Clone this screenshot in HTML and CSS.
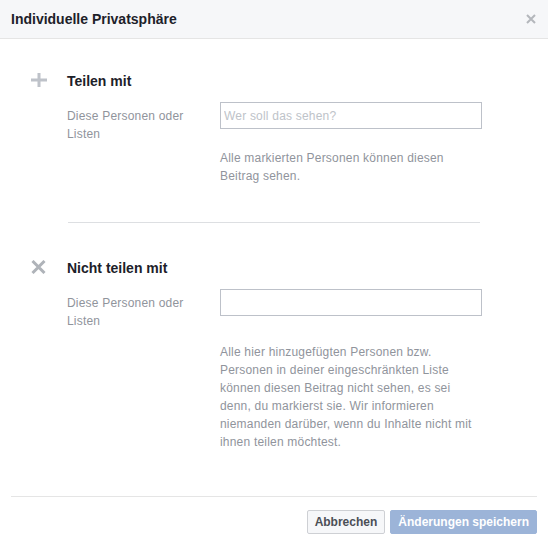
FILE: index.html
```html
<!DOCTYPE html>
<html lang="de">
<head>
    <meta charset="UTF-8">
    <meta name="viewport" content="width=device-width, initial-scale=1.0">
    <title>Individuelle Privatsphäre</title>
    <link rel="stylesheet" href="styles.css">
</head>
<body>
    <div class="dialog">
        <div class="dialog-head">
            <h2>Individuelle Privatsphäre</h2>
            <svg class="close-icon" width="10" height="10" viewBox="0 0 10 10">
                <path d="M1 1 L9 9 M9 1 L1 9" stroke="#b4b7bc" stroke-width="2" fill="none"/>
            </svg>
        </div>

        <div class="section">
            <div class="section-head">
                <svg class="section-icon" width="16" height="14" viewBox="0 0 16 14">
                    <path d="M0 7 H16 M8 0 V14" stroke="#bec2c9" stroke-width="3" fill="none"/>
                </svg>
                <h3>Teilen mit</h3>
            </div>
            <div class="row">
                <label>Diese Personen oder Listen</label>
                <div class="field">
                    <input type="text" placeholder="Wer soll das sehen?">
                    <p class="help">Alle markierten Personen können diesen Beitrag sehen.</p>
                </div>
            </div>
        </div>

        <hr class="divider">

        <div class="section section-exclude">
            <div class="section-head">
                <svg class="section-icon" width="16" height="14" viewBox="0 0 16 14">
                    <path d="M1.5 1 L13.5 13 M13.5 1 L1.5 13" stroke="#afb3b9" stroke-width="3" fill="none"/>
                </svg>
                <h3>Nicht teilen mit</h3>
            </div>
            <div class="row">
                <label>Diese Personen oder Listen</label>
                <div class="field">
                    <input type="text">
                    <p class="help">Alle hier hinzugefügten Personen bzw. Personen in deiner eingeschränkten Liste können diesen Beitrag nicht sehen, es sei denn, du markierst sie. Wir informieren niemanden darüber, wenn du Inhalte nicht mit ihnen teilen möchtest.</p>
                </div>
            </div>
        </div>

        <div class="dialog-foot">
            <button class="btn">Abbrechen</button>
            <button class="btn btn-primary" disabled>Änderungen speichern</button>
        </div>
    </div>
</body>
</html>
```

FILE: styles.css
```css
* {
    margin: 0;
    padding: 0;
    box-sizing: border-box;
}
body {
    background: #fff;
    font-family: "Liberation Sans", Arial, sans-serif;
    color: #1d2129;
}
.dialog {
    width: 548px;
}
.dialog-head {
    height: 39px;
    background-color: #f6f7f9;
    border-bottom: 1px solid #e5e5e5;
    padding: 0 12px 0 11px;
    display: flex;
    align-items: center;
    justify-content: space-between;
}
.dialog-head h2 {
    font-size: 14px;
    font-weight: bold;
    line-height: 18px;
    margin-top: -1px;
}
.section {
    padding-left: 31px;
    padding-top: 33px;
}
.section-head {
    display: flex;
    align-items: flex-start;
}
.section-icon {
    width: 16px;
    margin-right: 20px;
    margin-top: 1px;
}
.section-head h3 {
    font-size: 14px;
    font-weight: bold;
    line-height: 18px;
}
.row {
    display: flex;
    margin-left: 36px;
    margin-top: 12px;
}
.row label {
    width: 153px;
    font-size: 12px;
    line-height: 18px;
    letter-spacing: 0.2px;
    color: #90949c;
    margin-top: 5px;
    padding-right: 30px;
}
.field {
    width: 262px;
}
.field input {
    width: 262px;
    height: 27px;
    border: 1px solid #bdc1c9;
    padding: 0 3px;
    font-family: "Liberation Sans", Arial, sans-serif;
    font-size: 12px;
    letter-spacing: 0.2px;
    color: #1d2129;
    outline: none;
}
.field input::placeholder {
    color: #bec3c9;
}
.help {
    width: 260px;
    margin-top: 20px;
    font-size: 12px;
    line-height: 18px;
    letter-spacing: 0.2px;
    color: #90949c;
}
.section-exclude .help {
    margin-top: 27px;
}
.divider {
    border: none;
    border-top: 1px solid #dddfe2;
    width: 412px;
    margin: 37px 0 3px 68px;
}
.dialog-foot {
    margin: 45px 11px 0 11px;
    border-top: 1px solid #e5e5e5;
    padding-top: 13px;
    display: flex;
    justify-content: flex-end;
    gap: 5px;
}
.btn {
    height: 24px;
    padding: 0 7px;
    border: 1px solid #ced0d4;
    border-radius: 2px;
    background-color: #f6f7f9;
    color: #4b4f56;
    font-family: "Liberation Sans", Arial, sans-serif;
    font-size: 12px;
    font-weight: bold;
    cursor: pointer;
}
.btn-primary {
    background-color: #9cb4d8;
    border-color: #9cb4d8;
    color: #fff;
}
```
